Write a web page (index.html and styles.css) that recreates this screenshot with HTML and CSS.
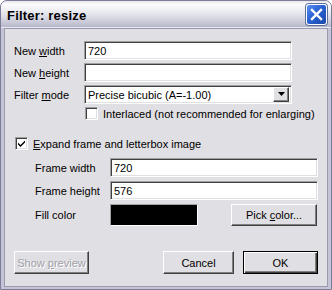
FILE: index.html
```html
<!DOCTYPE html>
<html>
<head>
<meta charset="utf-8">
<link rel="stylesheet" href="styles.css">
</head>
<body>
<div class="window">
  <div class="titlebar">
    <span class="title">Filter: resize</span>
    <span class="close"><svg width="13" height="13" viewBox="0 0 13 13"><path d="M2 2 L11 11 M11 2 L2 11" stroke="#fff" stroke-width="2.4" stroke-linecap="square" fill="none"/></svg></span>
  </div>
  <div class="client">
    <div class="row">
      <span class="label">New <u>w</u>idth</span>
      <span class="field">720</span>
    </div>
    <div class="row">
      <span class="label">New <u>h</u>eight</span>
      <span class="field"></span>
    </div>
    <div class="row">
      <span class="label">Filter <u>m</u>ode</span>
      <span class="field combo"><span class="combo-text">Precise bicubic (A=-1.00)</span><span class="arrow"><svg width="7" height="4" viewBox="0 0 7 4"><path d="M0 0 H7 L3.5 4 Z" fill="#000"/></svg></span></span>
    </div>
    <div class="row check-row interlaced">
      <span class="checkbox"></span>
      <span class="check-label">Interlaced (not recommended for enlarging)</span>
    </div>
    <div class="row check-row expand">
      <span class="checkbox"><svg width="9" height="9" viewBox="0 0 9 9"><path d="M1 3.5 L3.5 6 L8 1.5 V3.5 L3.5 8 L1 5.5 Z" fill="#000"/></svg></span>
      <span class="check-label"><u>E</u>xpand frame and letterbox image</span>
    </div>
    <div class="row sub first">
      <span class="label sublabel">Frame width</span>
      <span class="field">720</span>
    </div>
    <div class="row sub">
      <span class="label sublabel">Frame height</span>
      <span class="field">576</span>
    </div>
    <div class="row sub fill">
      <span class="label sublabel">Fill color</span>
      <span class="swatch"></span>
      <span class="btn pick"><span>Pick <u>c</u>olor...</span></span>
    </div>
    <div class="row buttons">
      <span class="btn disabled preview"><span>Show <u>p</u>review</span></span>
      <span class="btn cancel"><span>Cancel</span></span>
      <span class="btn ok"><span>OK</span></span>
    </div>
  </div>
</div>
</body>
</html>
```
FILE: styles.css
```css
html, body {
  margin: 0;
  padding: 0;
  background: #ffffff;
}
body {
  width: 332px;
  height: 290px;
  overflow: hidden;
  font-family: "Liberation Sans", Arial, sans-serif;
  font-size: 11px;
  color: #000;
}
.window {
  width: 332px;
  height: 290px;
  box-sizing: border-box;
  border: 1px solid #7c7c98;
  border-radius: 7px 7px 0 0;
  background: #c4c4d6;
  display: flex;
  flex-direction: column;
  overflow: hidden;
}
.titlebar {
  height: 26px;
  flex: none;
  display: flex;
  align-items: center;
  justify-content: space-between;
  padding: 0 4px 0 6px;
  background: linear-gradient(to bottom, #e6e6ee 0%, #fbfbfd 12%, #f2f2f6 30%, #dcdce6 60%, #c6c6d6 85%, #b6b6ca 100%);
  border-bottom: 1px solid #e8e8f0;
}
.title {
  font-weight: bold;
  font-size: 13px;
  letter-spacing: 0.2px;
  color: #000;
  padding-top: 2px;
}
.close {
  width: 21px;
  height: 21px;
  box-sizing: border-box;
  border: 1px solid #ffffff;
  border-radius: 3px;
  background: linear-gradient(135deg, #5a8ef0 0%, #2a62d4 45%, #1b48a8 100%);
  display: flex;
  align-items: center;
  justify-content: center;
  margin-top: 1px;
  box-shadow: 0 0 0 1px #5f6f9a;
}
.client {
  flex: 1;
  margin: 0 3px 2px 3px;
  background: #e0dfe3;
  border: 1px solid #9a9ab0;
  padding: 12px 0 0 9px;
  display: flex;
  flex-direction: column;
}
.row {
  display: flex;
  align-items: center;
  height: 19px;
  margin-bottom: 3px;
  flex: none;
}
.label {
  width: 70px;
  flex: none;
}
.field {
  width: 208px;
  height: 19px;
  box-sizing: border-box;
  border: 1px solid;
  border-color: #a0a0a0 #ffffff #ffffff #a0a0a0;
  box-shadow: inset 1px 1px 0 #404040, inset -1px -1px 0 #e0dfe3;
  background: #ffffff;
  padding: 2px 3px;
  line-height: 14px;
  flex: none;
  display: flex;
  align-items: center;
}
.combo {
  justify-content: space-between;
  padding-right: 2px;
}
.arrow {
  width: 16px;
  height: 15px;
  box-sizing: border-box;
  border: 1px solid;
  border-color: #ffffff #404040 #404040 #ffffff;
  box-shadow: inset -1px -1px 0 #808080;
  background: #e0dfe3;
  display: flex;
  align-items: center;
  justify-content: center;
  padding-bottom: 1px;
}
.check-row {
  height: 13px;
}
.interlaced {
  margin-left: 71px;
  margin-top: 0;
}
.expand {
  margin-top: 14px;
  margin-left: 1px;
}
.checkbox {
  width: 13px;
  height: 13px;
  box-sizing: border-box;
  border: 1px solid;
  border-color: #a0a0a0 #ffffff #ffffff #a0a0a0;
  box-shadow: inset 1px 1px 0 #404040, inset -1px -1px 0 #e0dfe3;
  background: #ffffff;
  flex: none;
  display: flex;
  align-items: center;
  justify-content: center;
}
.check-label {
  margin-left: 5px;
}
.sub {
  margin-left: 21px;
}
.sub.first {
  margin-top: 5px;
  margin-bottom: 4px;
}
.sublabel {
  width: 75px;
}
.fill {
  height: 22px;
  margin-top: 1px;
}
.swatch {
  width: 88px;
  height: 22px;
  box-sizing: border-box;
  border: 1px solid;
  border-color: #a0a0a0 #ffffff #ffffff #a0a0a0;
  background: #000000;
  flex: none;
}
.btn {
  box-sizing: border-box;
  height: 22px;
  border: 1px solid;
  border-color: #ffffff #404040 #404040 #ffffff;
  box-shadow: inset -1px -1px 0 #808080;
  background: #e0dfe3;
  display: flex;
  align-items: center;
  justify-content: center;
  flex: none;
}
.pick {
  width: 86px;
  margin-left: 33px;
}
.buttons {
  height: 23px;
  margin-top: 22px;
  margin-left: 0;
}
.buttons .btn {
  height: 23px;
}
.preview {
  width: 75px;
}
.disabled {
  color: #a0a0a8;
  text-shadow: 1px 1px 0 #ffffff;
}
.cancel {
  width: 71px;
  margin-left: 74px;
}
.ok {
  width: 75px;
  margin-left: 9px;
  border: 1px solid #000000;
  box-shadow: inset 1px 1px 0 #ffffff, inset -1px -1px 0 #404040, inset -2px -2px 0 #808080;
}
```
